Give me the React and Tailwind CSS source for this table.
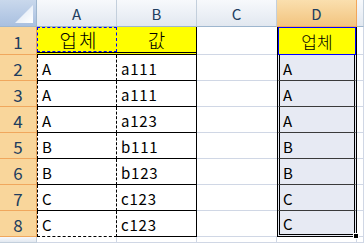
import React from 'react';

const colA = ['업체', 'A', 'A', 'A', 'B', 'B', 'C', 'C'];
const colB = ['값', 'a111', 'a111', 'a123', 'b111', 'b123', 'c123', 'c123'];
const colD = ['업체', 'A', 'A', 'A', 'B', 'B', 'C', 'C'];

const grayHead = 'bg-linear-to-b from-[#f7f9fc] to-[#e2e8f0] border-r border-b border-[#c3cfdc]';
const grid = 'border-r border-b border-[#d0d7e5]';

function ColHead({ label, active }) {
  return (
    <div
      className={`flex items-center justify-center text-[15px] text-[#213d5e] ${
        active
          ? 'bg-linear-to-b from-[#fadfae] to-[#f2c47f] border-r border-b border-[#f2a65a]'
          : grayHead + ' border-b-[#9eb6ce]'
      }`}
    >
      {label}
    </div>
  );
}

function RowHead({ n }) {
  return (
    <div className="flex items-center justify-center pt-[1px] bg-[#f9d69b] border-r border-b border-r-[#e9a35a] border-b-[#f0a75d] text-[17px] text-[#213d5e]">
      {n}
    </div>
  );
}

export default function App() {
  return (
    <div className="w-[364px] h-[243px] overflow-hidden bg-white font-['Noto_Sans_CJK_KR',sans-serif] leading-none">
      <div className="grid h-full grid-cols-[37px_80px_80px_80px_80px_1fr] grid-rows-[27px_28px_repeat(7,26px)_1fr]">
        {/* header row */}
        <div className="relative bg-linear-to-b from-[#c9d8ec] to-[#a9c0e0] border-r border-b border-[#9eb6ce]">
          <svg className="absolute right-[3px] bottom-[3px]" width="18" height="18" viewBox="0 0 18 18">
            <defs>
              <linearGradient id="tri" x1="0" y1="0" x2="1" y2="1">
                <stop offset="0" stopColor="#d8e4f3" />
                <stop offset="1" stopColor="#ffffff" />
              </linearGradient>
            </defs>
            <polygon points="18,0 18,18 0,18" fill="url(#tri)" />
          </svg>
        </div>
        <ColHead label="A" />
        <ColHead label="B" />
        <ColHead label="C" />
        <ColHead label="D" active />
        <div className={grayHead + ' border-b-[#9eb6ce]'} />

        {/* row 1 */}
        <RowHead n={1} />
        <div className="bg-[#ffff00] border-b-[3px] border-double border-black">
          <div className="h-full border border-dashed border-[#0000ff] flex items-center justify-center pl-[4px] text-[19px] font-light tracking-[2px]">
            {colA[0]}
          </div>
        </div>
        <div className="bg-[#ffff00] border-b-[3px] border-r border-double border-black flex items-center justify-center text-[19px] font-light">
          {colB[0]}
        </div>
        <div className="border-b border-[#d0d7e5]" />
        <div className="bg-[#ffff00] border-x border-black">
          <div className="h-full border border-[#0000ff] flex items-center justify-center text-[17px] font-light">
            {colD[0]}
          </div>
        </div>
        <div className={grid} />

        {/* rows 2-8 */}
        {[1, 2, 3, 4, 5, 6, 7].map((i) => (
          <React.Fragment key={i}>
            <RowHead n={i + 1} />
            <div
              className={`flex items-center pl-[4px] pt-[2px] text-[15px] border-x border-b border-dashed border-black ${
                i === 7 ? '' : '[border-bottom-style:solid]'
              }`}
            >
              {colA[i]}
            </div>
            <div className="flex items-center pl-[4px] pt-[2px] text-[15px] tracking-[0.8px] border-r border-b border-black">
              {colB[i]}
            </div>
            <div className="border-b border-[#d0d7e5]" />
            <div
              className={`relative flex items-center pl-[3px] pt-[2px] text-[15px] bg-[#e7eaf3] border-x-[3px] border-double border-black ${
                i === 7 ? 'border-b-[3px]' : 'border-b border-b-[#3a3a3a]'
              }`}
            >
              {colD[i]}
              {i === 7 && <div className="absolute -right-[5px] -bottom-[5px] w-[6px] h-[6px] bg-black border border-white" />}
            </div>
            <div className={grid} />
          </React.Fragment>
        ))}

        {/* row 9 (partial) */}
        <div className={grayHead} />
        <div className={grid} />
        <div className={grid} />
        <div className={grid} />
        <div className={grid} />
        <div className={grid} />
      </div>
    </div>
  );
}
